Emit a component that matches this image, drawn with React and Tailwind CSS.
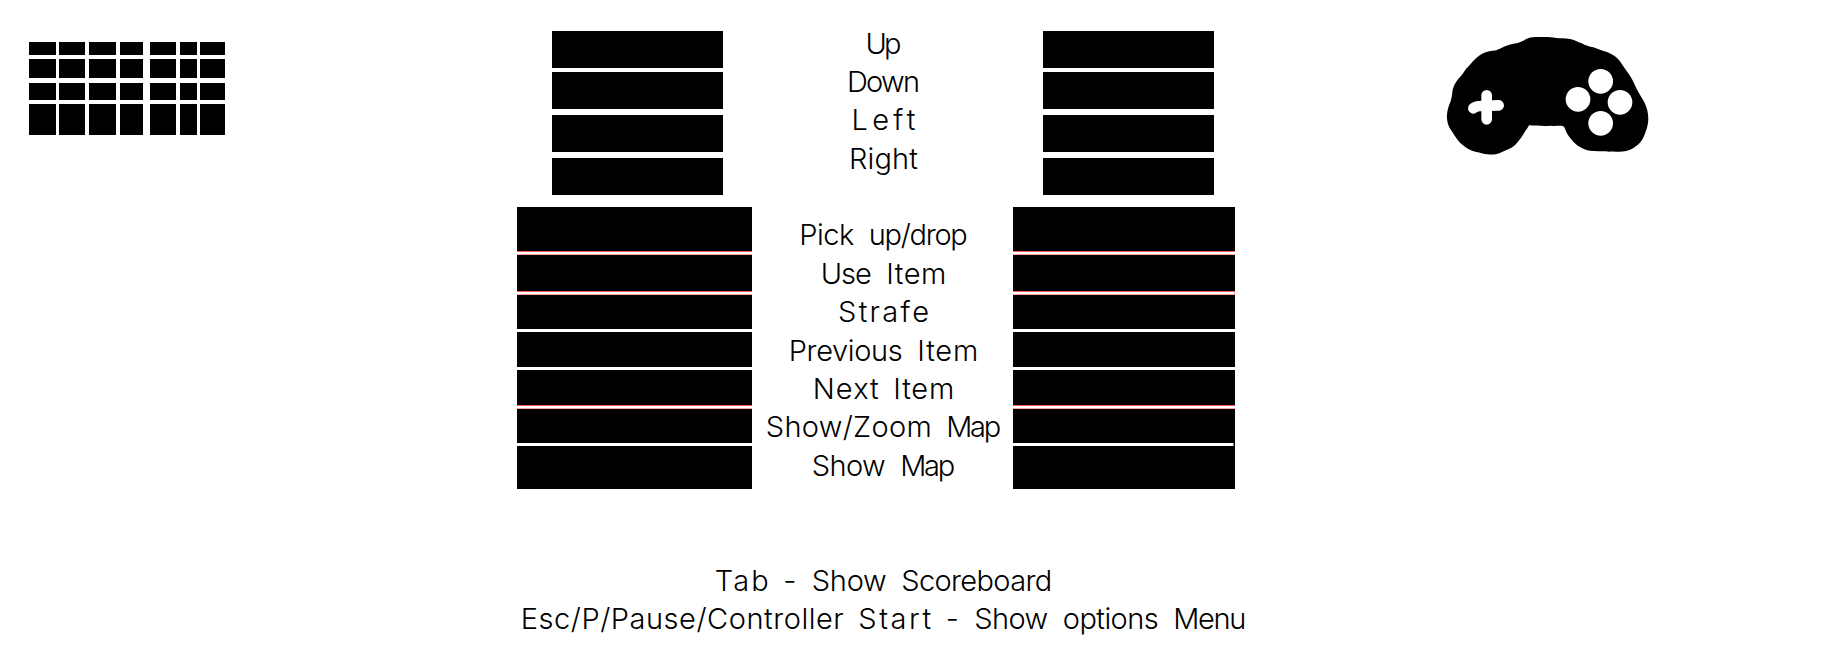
import { useLayoutEffect, useRef, useState } from 'react';

const keyColumns = ['w-[27px]', 'w-[26px] ml-[3px]', 'w-[27px] ml-1', 'w-[23px] ml-1', 'w-[26px] ml-[7px]', 'w-[17px] ml-1', 'w-[25px] ml-[3px]'];
const keyRows = ['h-[13px]', 'h-[19px] mt-1', 'h-[17px] mt-[5px]', 'h-[31px] mt-1'];

// Each line is a list of [word, width]; an empty list is a blank line.
const lines = [
  [['Up', 33]],
  [['Down', 70]],
  [['Left', 61]],
  [['Right', 66]],
  [],
  [['Pick', 52], ['up/drop', 96]],
  [['Use', 48], ['Item', 57]],
  [['Strafe', 88]],
  [['Previous', 111], ['Item', 58]],
  [['Next', 63], ['Item', 58]],
  [['Show/Zoom', 163], ['Map', 52]],
  [['Show', 71], ['Map', 52]],
  [],
  [],
  [['Tab', 51], ['-', 11], ['Show', 72], ['Scoreboard', 148]],
  [['Esc/P/Pause/Controller', 320], ['Start', 70], ['-', 11], ['Show', 71], ['options', 93], ['Menu', 70]],
];

function Word({ text, width }) {
  const ref = useRef(null);
  const [spacing, setSpacing] = useState(0);
  const box = width + 3;
  useLayoutEffect(() => {
    const natural = ref.current.getBoundingClientRect().width;
    if (text.length > 1) setSpacing((box - natural) / (text.length - 1));
  }, []);
  return (
    <span className="block shrink-0 whitespace-nowrap" style={{ width: box }}>
      <span ref={ref} className="inline-block" style={{ letterSpacing: spacing }}>{text}</span>
    </span>
  );
}

function Keyboard() {
  return (
    <div className="flex flex-col">
      {keyRows.map((row) => (
        <div key={row} className={`flex ${row}`}>
          {keyColumns.map((col) => <div key={col} className={`h-full bg-black ${col}`} />)}
        </div>
      ))}
    </div>
  );
}

function Gamepad() {
  return (
    <svg className="block h-[140px] w-[240px]" viewBox="0 0 720 420">
      <path
        d="M296 39C312 34 330 37 347 36C362 35 375 39 387 40C399 39 409 40 420 42C433 44 444 51 455 55C466 62 478 65 490 67C503 71 517 78 531 81C549 88 561 97 570 109C577 122 590 137 599 151C610 168 617 187 625 201C634 218 645 231 649 247C657 269 656 291 651 308C646 322 643 335 634 348C621 364 604 376 584 379C568 382 552 378 538 380C524 378 508 380 494 378C480 379 467 375 455 369C437 360 424 345 414 330C406 319 406 309 400 304C389 301 376 304 363 302C344 304 320 302 297 301C293 310 286 317 281 326C274 338 265 349 256 359C245 370 229 375 216 381C203 388 187 390 173 388C160 388 150 382 139 381C124 378 110 371 99 361C87 352 81 342 73 331C67 319 57 310 54 297C48 278 51 260 57 241C65 225 66 210 68 194C73 176 82 164 93 153C102 144 105 133 116 124C125 114 133 102 146 93C158 84 171 79 186 77C203 78 212 68 227 63C242 56 258 57 271 51C280 48 287 42 296 39Z"
        fill="#000"
      />
      <path d="M170 211V283M206 241L151 243Q138 243 130 250" fill="none" stroke="#fff" strokeWidth="32" strokeLinecap="round" />
      <g fill="#fff">
        <circle cx="512" cy="169" r="37" />
        <circle cx="444" cy="223" r="37" />
        <circle cx="570" cy="232" r="37" />
        <circle cx="512" cy="295" r="37" />
      </g>
    </svg>
  );
}

function RedGap({ capped = false }) {
  return (
    <div
      className={`h-1 border-t border-b border-t-[#ff5555] border-b-[#ffa0a0] bg-white ${capped ? 'border-r border-r-[#ffa0a0]' : ''}`}
    />
  );
}

function Bindings({ side }) {
  const right = side === 'right';
  return (
    <div className={`flex shrink-0 flex-col pt-[31px] ${right ? 'w-[222px]' : 'w-[235px]'}`}>
      <div className={`flex w-[171px] flex-col ${right ? 'ml-[30px]' : 'ml-[35px]'}`}>
        <div className="h-[37px] bg-black" />
        <div className="mt-1 h-[37px] bg-black" />
        <div className="mt-1.5 h-[37px] bg-black" />
        <div className="mt-1.5 h-[37px] bg-black" />
      </div>
      <div className="mt-3 flex flex-col bg-black">
        <div className="h-11" />
        <RedGap />
        <div className="h-9" />
        <RedGap capped={right} />
        <div className="h-[34px]" />
        <div className="h-[3px] bg-white" />
        <div className="h-[35px]" />
        <div className="h-[3px] bg-white" />
        <div className="h-[35px]" />
        <RedGap />
        <div className="h-[34px]" />
        <div className={`h-[3px] bg-white ${right ? 'mr-px border-r border-[#ff4040]' : ''}`} />
        <div className="h-[43px]" />
      </div>
    </div>
  );
}

export default function App() {
  return (
    <div className="flex h-[666px] w-[1825px] items-start overflow-hidden bg-white text-black">
      <div className="w-[517px] shrink-0 pt-[42px] pl-[29px]">
        <Keyboard />
      </div>
      <Bindings side="left" />
      <div className="flex w-[261px] shrink-0 flex-col pt-[24.5px] pl-[2px] font-['Inter',sans-serif] text-[29px] leading-[38.4px] font-[360]">
        {lines.map((words, i) => (
          <div key={i} className="flex h-[38.4px] justify-center gap-[14.5px]">
            {words.map(([text, width], j) => <Word key={j} text={text} width={width} />)}
          </div>
        ))}
      </div>
      <Bindings side="right" />
      <div className="pt-[25px] pl-[195px]">
        <Gamepad />
      </div>
    </div>
  );
}
